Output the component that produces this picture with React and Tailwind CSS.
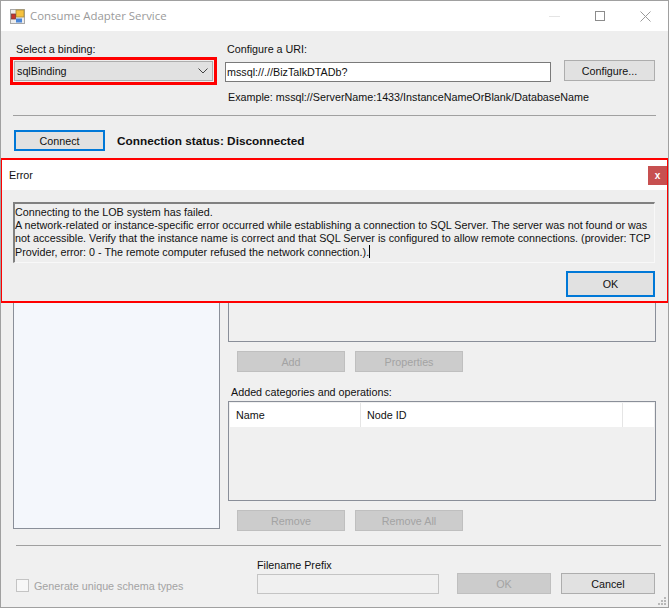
import React from 'react';

const ui = "font-['Liberation_Sans',Arial,sans-serif] text-[10.75px] leading-[14px]";

const WinButton = ({ children, className = '', disabled = false, focused = false }) => {
  const look = disabled
    ? 'bg-[#cccccc] border-[#bfbfbf] text-[#a3a3a3]'
    : focused
      ? 'bg-[#e1e1e1] border-2 border-[#0078d7] text-[#111111]'
      : 'bg-[#e1e1e1] border-[#adadad] text-[#111111]';
  return (
    <button className={`flex items-center justify-center border ${look} ${className}`}>
      {children}
    </button>
  );
};

const AppIcon = () => (
  <svg width="15" height="15" viewBox="0 0 15 15" className="shrink-0">
    <rect x="0.5" y="0.5" width="14" height="14" fill="#ececec" stroke="#a8a8a8" />
    <rect x="6" y="1" width="8" height="7" fill="#f6c23e" stroke="#a88a3a" strokeWidth="0.8" />
    <rect x="1.5" y="5" width="4" height="5" fill="#c8332b" stroke="#7a3a3a" strokeWidth="0.8" />
    <rect x="6" y="9.5" width="6" height="4" fill="#4a86d8" />
  </svg>
);

const ResizeGrip = () => (
  <svg width="12" height="12" viewBox="0 0 12 12" className="absolute right-[1px] bottom-[1px]">
    {[[9, 0], [6, 3], [9, 3], [3, 6], [6, 6], [9, 6]].map(([x, y]) => (
      <rect key={`${x}-${y}`} x={x} y={y + 3} width="2" height="2" fill="#b8b8b8" />
    ))}
  </svg>
);

const App = () => {
  return (
    <div className={`relative w-[669px] h-[608px] overflow-hidden flex flex-col bg-[#f0f0f0] border border-[#a0a0a0] text-[#111111] ${ui}`}>
      {/* Title bar */}
      <div className="h-[30px] bg-white flex items-center pl-[9px] shrink-0">
        <AppIcon />
        <span className="ml-[5px] font-['Open_Sans',sans-serif] text-[11.4px] text-[#9a9a9a]">Consume Adapter Service</span>
        <div className="ml-auto flex items-center pr-[17px] gap-[35px]">
          <div className="w-[11px] h-[1px] bg-[#e4e4e4]" />
          <div className="w-[10px] h-[10px] border border-[#8c8c8c]" />
          <svg width="11" height="11" viewBox="0 0 11 11">
            <path d="M0.5 0.5 10.5 10.5M10.5 0.5 0.5 10.5" stroke="#9a9a9a" fill="none" />
          </svg>
        </div>
      </div>

      {/* Binding and URI */}
      <div className="flex bg-[#eeeeee] pt-[11px] h-[127px] shrink-0 flex-col">
        <div className="flex">
          <div className="w-[226px] pl-[15px]">
            <div className="h-[16px]">Select a binding:</div>
            <div className="ml-[-6px] w-[207px] h-[28px] border-[3px] border-[#ff0000] p-[1px] mt-[-1px]">
              <div className="h-full bg-[#e1e1e1] border border-[#adadad] flex items-center justify-between pl-[2px] pr-[4px]">
                <span>sqlBinding</span>
                <svg width="10" height="6" viewBox="0 0 10 6"><path d="M0.5 0.5 5 5 9.5 0.5" stroke="#444444" fill="none" /></svg>
              </div>
            </div>
          </div>
          <div className="w-[337px]">
            <div className="h-[16px]">Configure a URI:</div>
            <div className="ml-[-2px] mt-[4px] w-[326px] h-[20px] bg-white border border-[#7a7a7a] flex items-center pl-[1px]">mssql://.//BizTalkDTADb?</div>
            <div className="mt-[8px] ml-[1px] whitespace-nowrap">Example: mssql://ServerName:1433/InstanceNameOrBlank/DatabaseName</div>
          </div>
          <WinButton className="w-[91px] h-[21px] mt-[18px]">Configure...</WinButton>
        </div>
        <div className="h-[1px] bg-[#a0a0a0] mx-[12px] w-[643px] mt-[11px]" />
        <div className="flex items-center ml-[13px] mt-[14px]">
          <WinButton focused className="w-[91px] h-[21px]">Connect</WinButton>
          <span className="ml-[12px] font-bold text-[11.8px]">Connection status: Disconnected</span>
        </div>
      </div>

      {/* Operation lists */}
      <div className="flex mt-[4px] pl-[12px] flex-1 min-h-0">
        <div className="w-[207px] h-[367px] bg-[#f4f7fc] border border-[#8a8f99] shrink-0" />
        <div className="ml-[8px] w-[428px] flex flex-col">
          <div className="h-[180px] border border-[#8a8f99]" />
          <div className="flex gap-[10px] ml-[9px] mt-[9px]">
            <WinButton disabled className="w-[108px] h-[21px]">Add</WinButton>
            <WinButton disabled className="w-[108px] h-[21px]">Properties</WinButton>
          </div>
          <div className="ml-[3px] mt-[13px] h-[16px]">Added categories and operations:</div>
          <div className="h-[100px] border border-[#8a8f99]">
            <div className="h-[24px] mt-[1px] mx-[1px] bg-white flex items-center">
              <div className="w-[131px] h-full flex items-center pl-[6px] border-r border-[#e5e5e5]">Name</div>
              <div className="w-[262px] h-full flex items-center pl-[6px] border-r border-[#e5e5e5]">Node ID</div>
            </div>
          </div>
          <div className="flex gap-[10px] ml-[9px] mt-[9px]">
            <WinButton disabled className="w-[108px] h-[21px]">Remove</WinButton>
            <WinButton disabled className="w-[108px] h-[21px]">Remove All</WinButton>
          </div>
        </div>
      </div>

      {/* Footer */}
      <div className="absolute left-0 right-0 bottom-0 h-[62px]">
        <div className="h-[1px] bg-[#a0a0a0] ml-[15px] w-[645px]" />
        <div className="flex items-end mt-[12px] pl-[15px]">
          <div className="flex items-center w-[241px] h-[15px] mb-[13px] text-[#a3a3a3]">
            <div className="w-[13px] h-[13px] bg-[#f7f7f7] border border-[#c4c4c4]" />
            <span className="ml-[5px]">Generate unique schema types</span>
          </div>
          <div className="w-[200px]">
            <div className="h-[16px]">Filename Prefix</div>
            <div className="w-[182px] h-[20px] border border-[#c4c4c4] bg-[#f0f0f0] mb-[12px]" />
          </div>
          <WinButton disabled className="w-[94px] h-[21px] mb-[12px]">OK</WinButton>
          <WinButton className="w-[94px] h-[21px] ml-[10px] mb-[12px]">Cancel</WinButton>
        </div>
      </div>
      <ResizeGrip />

      {/* Error dialog on top of the window */}
      <div className="absolute left-[-1px] top-[157px] w-[669px] h-[145px] border-2 border-[#ff0000] bg-[#eeeeee] flex flex-col">
        <div className="h-[30px] bg-white flex items-center pl-[7px] shrink-0">
          Error
          <div className="ml-auto mt-[1px] w-[19px] h-[19px] bg-[#c75050] flex items-center justify-center text-white font-bold text-[10px]">x</div>
        </div>
        <div className="ml-[11px] mt-[12px] w-[642px] h-[61px] border border-t-2 border-l-2 border-t-[#808080] border-l-[#808080] border-r-[#f8f8f8] border-b-[#f8f8f8] pt-[2px] leading-[13px]">
          Connecting to the LOB system has failed.<br />
          A network-related or instance-specific error occurred while establishing a connection to SQL Server. The server was not found or was not accessible. Verify that the instance name is correct and that SQL Server is configured to allow remote connections. (provider: TCP Provider, error: 0 - The remote computer refused the network connection.).<span className="inline-block w-[1px] h-[13px] bg-black align-text-bottom" />
        </div>
        <div className="flex justify-end pr-[12px] mt-[8px]">
          <WinButton focused className="w-[89px] h-[26px]">OK</WinButton>
        </div>
      </div>
    </div>
  );
};

export default App;
